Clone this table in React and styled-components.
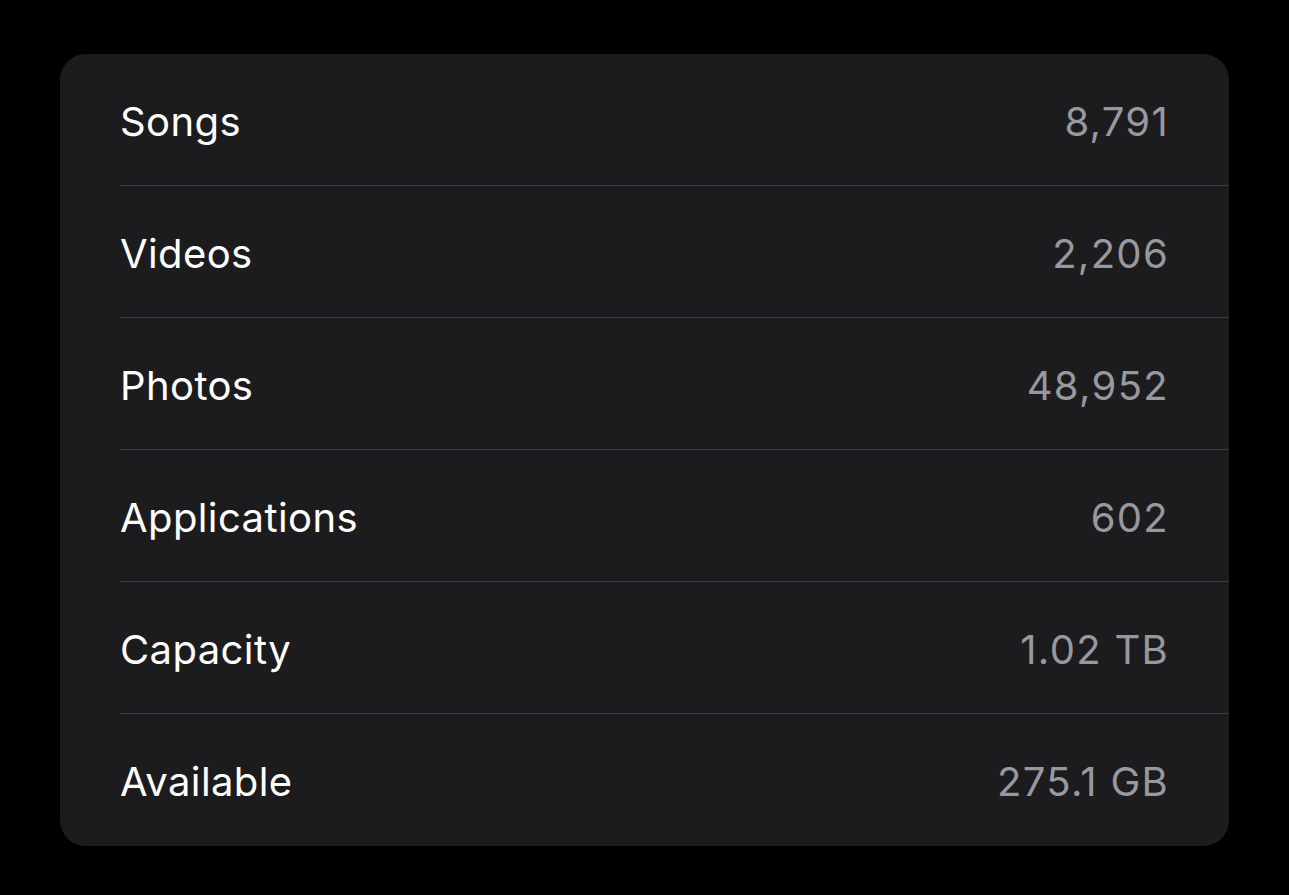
import React from "react";
import styled, { createGlobalStyle } from "styled-components";

const Global = createGlobalStyle`
  html, body { margin: 0; padding: 0; background: #000; }
  body { font-family: Inter, "Noto Sans", sans-serif; -webkit-font-smoothing: antialiased; }
`;

const Page = styled.div`
  width: 1289px;
  height: 895px;
  background: #000;
  padding: 54px 60px 0 60px;
  box-sizing: border-box;
`;

const Card = styled.div`
  width: 1169px;
  background: #1c1c1e;
  border-radius: 26px;
  overflow: hidden;
  display: flex;
  flex-direction: column;
`;

const Row = styled.div`
  display: flex;
  align-items: center;
  justify-content: space-between;
  box-sizing: border-box;
  height: 132px;
  padding-top: 3px;
  margin-left: 60px;
  padding-right: 61px;
  border-bottom: ${(p) => (p.$last ? "none" : "1px solid #3d3d41")};
  font-size: 40px;
`;

const Label = styled.span`
  color: #ffffff;
  letter-spacing: 0.4px;
`;

const Value = styled.span`
  color: #98989f;
  letter-spacing: 1.3px;
  margin-right: -1px;
`;

const rows = [
  ["Songs", "8,791"],
  ["Videos", "2,206"],
  ["Photos", "48,952"],
  ["Applications", "602"],
  ["Capacity", "1.02 TB"],
  ["Available", "275.1 GB"],
];

export default function App() {
  return (
    <>
      <Global />
      <Page>
        <Card>
          {rows.map(([l, v], i) => (
            <Row key={l} $last={i === rows.length - 1}>
              <Label>{l}</Label>
              <Value>{v}</Value>
            </Row>
          ))}
        </Card>
      </Page>
    </>
  );
}
